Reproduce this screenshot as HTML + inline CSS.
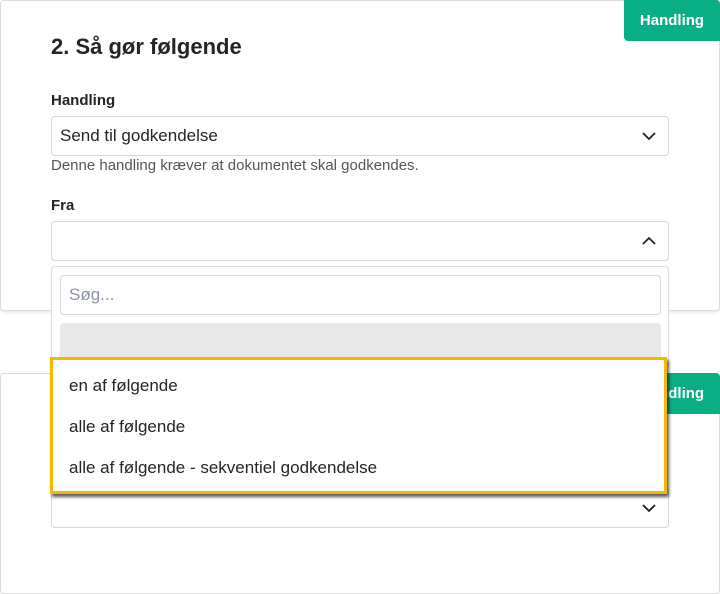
<!DOCTYPE html>
<html><head><meta charset="utf-8"><style>
*{box-sizing:border-box;margin:0;padding:0}
body{width:720px;height:594px;background:#fff;position:relative;overflow:hidden;font-family:"Liberation Sans",Arial,sans-serif;color:#212529}
.card{position:absolute;left:0;width:720px;border:1px solid #dcdcdc;border-radius:4px;background:#fff;box-shadow:0 2px 3px rgba(0,0,0,.08)}
.badge{position:absolute;right:-1px;background:#0aae84;color:#fff;font-weight:bold;font-size:15px;width:96px;height:41px;line-height:41px;text-align:center;border-radius:0 4px 0 4px}
.abs{position:absolute}
.sel{position:absolute;left:51px;width:618px;height:40px;border:1px solid #d6d6d6;border-radius:4px;background:#fff}
.chev{position:absolute;right:12px;top:13px}
</style></head><body>
<div class="card" style="top:0;height:311px">
<div class="badge" style="top:-1px">Handling</div>
</div>
<div class="abs" style="left:51px;top:34px;font-size:22px;font-weight:bold">2. Så gør følgende</div>
<div class="abs" style="left:51px;top:92px;font-size:15px;font-weight:bold">Handling</div>
<div class="sel" style="top:116px"><span class="abs" style="left:8px;top:9px;font-size:17px">Send til godkendelse</span>
<svg class="chev" width="14" height="12" viewBox="0 0 14 12"><path d="M1 3l6 6 6-6" fill="none" stroke="#222" stroke-width="1.8"/></svg></div>
<div class="abs" style="left:51px;top:157px;font-size:15px;color:#555">Denne handling kræver at dokumentet skal godkendes.</div>
<div class="abs" style="left:51px;top:197px;font-size:15px;font-weight:bold">Fra</div>
<div class="sel" style="top:221px"><svg class="chev" width="14" height="12" viewBox="0 0 14 12"><path d="M1 9l6-6 6 6" fill="none" stroke="#222" stroke-width="1.8"/></svg></div>

<div class="card" style="top:373px;height:221px"><div class="badge" style="top:-1px">Handling</div></div>
<div class="sel" style="top:488px"><svg class="chev" width="14" height="12" viewBox="0 0 14 12"><path d="M1 3l6 6 6-6" fill="none" stroke="#222" stroke-width="1.8"/></svg></div>

<div class="abs" style="left:51px;top:266px;width:618px;height:100px;background:#fff;border:1px solid #ddd;border-bottom:none;border-radius:4px 4px 0 0"></div>
<div class="abs" style="left:60px;top:275px;width:601px;height:40px;border:1px solid #d6d6d6;border-radius:4px"><span class="abs" style="left:8px;top:9px;font-size:17px;color:#8a94a0">Søg...</span></div>
<div class="abs" style="left:60px;top:323px;width:601px;height:40px;background:#e9e9e9;border-radius:4px 4px 0 0"></div>
<div class="abs" style="left:50px;top:357px;width:617px;height:137px;background:#fff;border:3px solid #f5b800;box-shadow:2px 3px 3px rgba(0,0,0,.65)">
<div class="abs" style="left:16px;top:16px;font-size:17px">en af følgende</div>
<div class="abs" style="left:16px;top:57px;font-size:17px">alle af følgende</div>
<div class="abs" style="left:16px;top:98px;font-size:17px">alle af følgende - sekventiel godkendelse</div>
</div>
</body></html>
